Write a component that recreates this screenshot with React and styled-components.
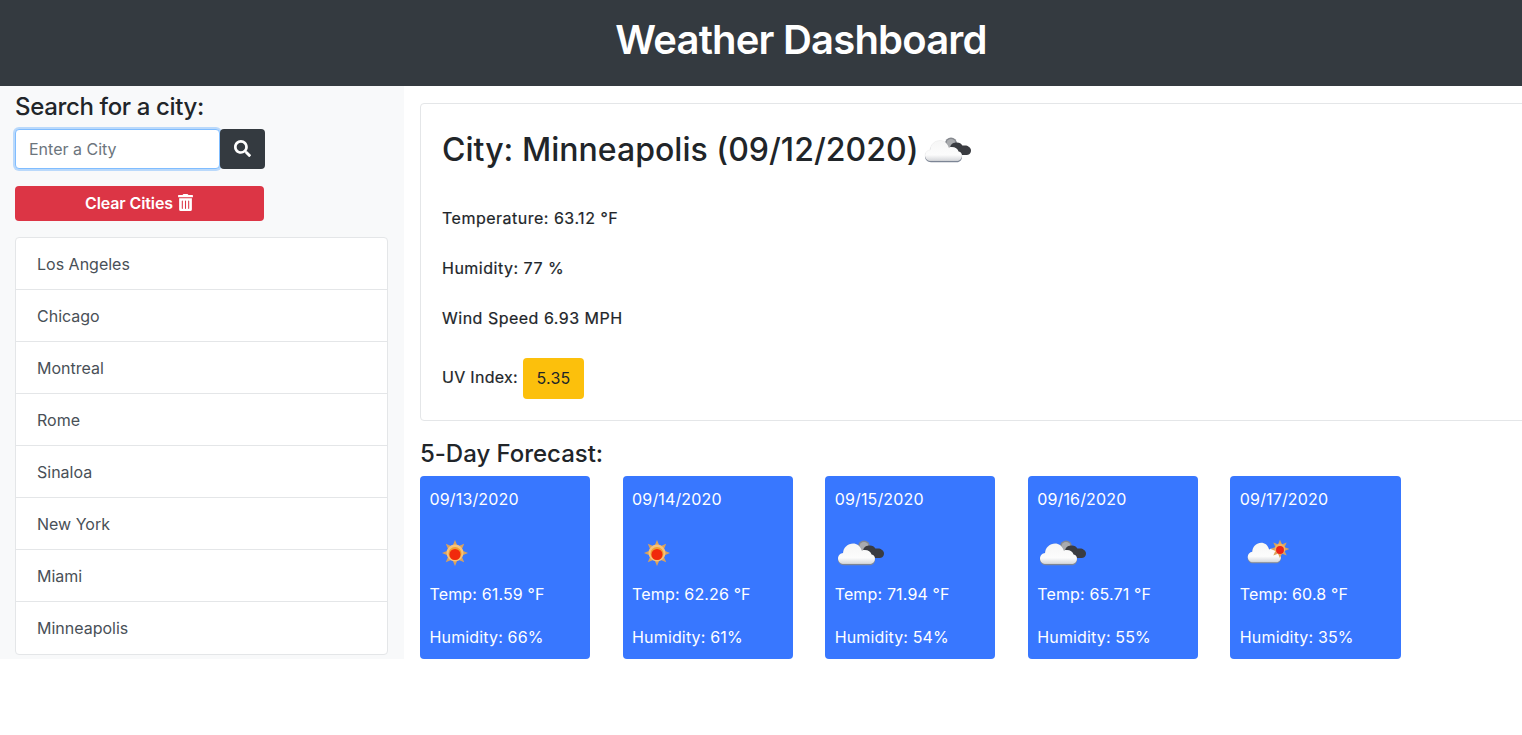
import React from 'react';
import styled, { createGlobalStyle } from 'styled-components';
import { FaSearch, FaTrashAlt } from 'react-icons/fa';

const cities = ['Los Angeles', 'Chicago', 'Montreal', 'Rome', 'Sinaloa', 'New York', 'Miami', 'Minneapolis'];

const forecast = [
  { date: '09/13/2020', icon: 'sun', temp: '61.59', humidity: '66' },
  { date: '09/14/2020', icon: 'sun', temp: '62.26', humidity: '61' },
  { date: '09/15/2020', icon: 'dark', temp: '71.94', humidity: '54' },
  { date: '09/16/2020', icon: 'dark', temp: '65.71', humidity: '55' },
  { date: '09/17/2020', icon: 'few', temp: '60.8', humidity: '35' },
];

const CLOUD = 'M9 36c-3.500 0-6-2.400-6-5.600 0-3 2.200-5.200 5-5.500 .4-5.500 4.800-9.400 10-9.400 4 0 7.300 2.200 8.800 7 1-.5 2-.6 3.200-.6 3.400 0 5.600 1.500 6.600 4.500 2.500 .5 3.400 2 3.400 4.300 0 2.700-2 5.300-5 5.300z';
const DARK_CLOUD = 'M29 30c-2.500 0-4.500-1.700-4.500-3.900 0-2.100 1.600-3.700 3.700-3.900 .5-3.400 3.400-4.700 6.800-4.700 2.600 0 4.200 1 5.400 3.100 .5-.1 2.100 0 2.600 0 2.700 0 6 2.100 6 4.800 0 3-2.200 4.600-5 4.600z';

function SunRays() {
  const rays = [0, 45, 90, 135, 180, 225, 270, 315];
  return rays.map((r) => (
    <polygon key={r} points="25,12 27.500,18 22.500,18" fill="#d8a25e" transform={`rotate(${r} 25 25)`} />
  ));
}

function WhiteCloud() {
  return (
    <>
      <defs>
        <linearGradient id="cloudFill" x1="0" y1="0" x2="0" y2="1">
          <stop offset="0" stopColor="#f6f6f6" />
          <stop offset="0.7" stopColor="#fcfcfc" />
          <stop offset="1" stopColor="#d4d6da" />
        </linearGradient>
      </defs>
      <path d={CLOUD} fill="#7f8898" transform="translate(0 1.200)" />
      <path d={CLOUD} fill="url(#cloudFill)" stroke="#000" strokeOpacity=".07" strokeWidth=".6" />
    </>
  );
}

function WeatherIcon({ type }) {
  if (type === 'sun') {
    return (
      <IconSvg viewBox="0 0 50 50">
        <SunRays />
        <circle cx="25" cy="25" r="8.500" fill="#f7c27a" />
        <circle cx="25" cy="25.500" r="6.500" fill="#f0a030" />
        <circle cx="25" cy="26.500" r="5.500" fill="#f12a0c" />
      </IconSvg>
    );
  }
  if (type === 'few') {
    return (
      <IconSvg viewBox="0 0 50 50">
        <g transform="translate(5 0) scale(.9 .95)">
          <WhiteCloud />
        </g>
        <g transform="translate(22 3) scale(.72)">
          <SunRays />
          <circle cx="25" cy="25" r="7.500" fill="#f7b35c" />
          <circle cx="25" cy="26.500" r="5.500" fill="#e9241a" />
        </g>
      </IconSvg>
    );
  }
  return (
    <IconSvg viewBox="0 0 50 50">
      <circle cx="29" cy="18.500" r="6" fill="#85888e" />
      <circle cx="29" cy="18.500" r="4.500" fill="#a9abae" />
      <path d={DARK_CLOUD} fill="#3a3c41" />
      <WhiteCloud />
    </IconSvg>
  );
}

function App() {
  return (
    <>
      <GlobalStyle />
      <Viewport>
        <Page>
          <Header>
            <Title>Weather Dashboard</Title>
          </Header>
          <Columns>
            <Sidebar>
              <SectionHeading>Search for a city:</SectionHeading>
              <SearchRow>
                <CityInput placeholder="Enter a City" />
                <SearchButton aria-label="Search"><FaSearch /></SearchButton>
              </SearchRow>
              <ClearButton>Clear Cities <FaTrashAlt /></ClearButton>
              <CityList>
                {cities.map((city) => (
                  <CityItem key={city}>{city}</CityItem>
                ))}
              </CityList>
            </Sidebar>
            <Main>
              <CurrentCard>
                <CityTitle>
                  City: Minneapolis (09/12/2020)
                  <TitleIcon><WeatherIcon type="dark" /></TitleIcon>
                </CityTitle>
                <Stat>Temperature: 63.12 °F</Stat>
                <Stat>Humidity: 77 %</Stat>
                <LastStat>Wind Speed 6.93 MPH</LastStat>
                <UvRow>
                  <UvLabel>UV Index:</UvLabel>
                  <UvBadge>5.35</UvBadge>
                </UvRow>
              </CurrentCard>
              <ForecastHeading>5-Day Forecast:</ForecastHeading>
              <ForecastRow>
                {forecast.map((day) => (
                  <DayCard key={day.date}>
                    <DayText>{day.date}</DayText>
                    <DayIcon><WeatherIcon type={day.icon} /></DayIcon>
                    <DayText>Temp: {day.temp} °F</DayText>
                    <Humidity>Humidity: {day.humidity}%</Humidity>
                  </DayCard>
                ))}
              </ForecastRow>
            </Main>
          </Columns>
        </Page>
      </Viewport>
    </>
  );
}

const GlobalStyle = createGlobalStyle`
  * {
    box-sizing: border-box;
  }
  html, body {
    margin: 0;
    background: #fff;
    overflow: hidden;
  }
  body {
    font-family: Inter, "Liberation Sans", sans-serif;
    font-size: 16px;
    line-height: 24px;
    color: #212529;
  }
`;

const Viewport = styled.div`
  width: 1522px;
  height: 735px;
  overflow: hidden;
`;

const Page = styled.div`
  width: 1602px;
`;

const Header = styled.header`
  height: 86px;
  background: #343a40;
  display: flex;
  align-items: center;
  justify-content: center;
`;

const Title = styled.h1`
  margin: 0 0 7px;
  color: #fff;
  font-size: 40px;
  line-height: 48px;
  font-weight: 600;
  letter-spacing: -0.8px;
`;

const Columns = styled.div`
  display: flex;
  align-items: stretch;
`;

const Sidebar = styled.aside`
  width: 404px;
  flex: none;
  background: #f8f9fa;
  padding: 6px 16px 3px 15px;
`;

const SectionHeading = styled.h4`
  margin: 0;
  font-size: 24px;
  line-height: 29px;
  font-weight: 500;
  letter-spacing: -0.35px;
`;

const SearchRow = styled.div`
  display: flex;
  margin-top: 8px;
`;

const CityInput = styled.input`
  width: 205px;
  height: 40px;
  padding: 0 13px;
  border: 1px solid #80bdff;
  border-radius: 4px;
  box-shadow: 0 0 0 2px rgba(0, 123, 255, 0.25);
  font: inherit;
  outline: none;
  background: #fff;
  &::placeholder {
    color: #6c757d;
    opacity: 1;
  }
`;

const SearchButton = styled.button`
  width: 45px;
  height: 40px;
  border: 0;
  border-radius: 4px;
  background: #343a40;
  color: #fff;
  font-size: 17px;
  display: flex;
  align-items: center;
  justify-content: center;
  padding: 0 0 2px;
`;

const ClearButton = styled.button`
  display: flex;
  align-items: center;
  justify-content: center;
  gap: 4px;
  width: 249px;
  height: 35px;
  margin-top: 17px;
  padding: 0 0 2px;
  border: 0;
  border-radius: 4px;
  background: #dc3545;
  color: #fff;
  font: 600 16px/24px Inter, "Liberation Sans", sans-serif;
  letter-spacing: -0.1px;
  svg {
    font-size: 17px;
  }
`;

const CityList = styled.ul`
  list-style: none;
  margin: 16px 0 0;
  padding: 0;
  background: #fff;
  border: 1px solid #e4e6e8;
  border-radius: 4px;
`;

const CityItem = styled.li`
  height: 52px;
  padding: 0 21px;
  display: flex;
  align-items: center;
  color: #495057;
  &:not(:last-child) {
    border-bottom: 1px solid #e4e6e8;
  }
`;

const Main = styled.main`
  flex: 1;
  padding: 17px 16px 0;
`;

const CurrentCard = styled.section`
  border: 1px solid #e4e6e8;
  border-radius: 4px;
  padding: 27px 21px 21px;
`;

const CityTitle = styled.h2`
  display: flex;
  align-items: center;
  height: 38px;
  margin: 0 0 37px;
  font-size: 32px;
  line-height: 38px;
  font-weight: 500;
  letter-spacing: 0.03px;
`;

const TitleIcon = styled.span`
  display: flex;
  margin-left: 4px;
`;

const IconSvg = styled.svg`
  width: 50px;
  height: 50px;
  display: block;
`;

const Stat = styled.p`
  margin: 0 0 26px;
  font-weight: 400;
  letter-spacing: 0.5px;
  -webkit-text-stroke: 0.2px #212529;
`;

const LastStat = styled(Stat)`
  margin-bottom: 28px;
`;

const UvRow = styled.div`
  display: flex;
  align-items: center;
  gap: 5px;
`;

const UvLabel = styled.span`
  margin-bottom: 3px;
  font-weight: 400;
  letter-spacing: 0.3px;
  -webkit-text-stroke: 0.2px #212529;
`;

const UvBadge = styled.span`
  width: 61px;
  height: 41px;
  display: flex;
  align-items: center;
  justify-content: center;
  background: #fcc00c;
  border-radius: 4px;
  padding-bottom: 1px;
  letter-spacing: 0.2px;
`;

const ForecastHeading = styled.h4`
  margin: 18px 0 8px;
  font-size: 24px;
  line-height: 29px;
  font-weight: 500;
  letter-spacing: -0.03px;
`;

const ForecastRow = styled.div`
  display: flex;
  gap: 32.4px;
`;

const DayCard = styled.article`
  width: 170.2px;
  height: 183px;
  padding: 11px 9.5px 10px;
  background: #3877ff;
  border-radius: 4px;
  color: #fff;
`;

const DayText = styled.div`
  white-space: nowrap;
  letter-spacing: 0.15px;
`;

const DayIcon = styled.div`
  margin: 17px 0 4px;
`;

const Humidity = styled(DayText)`
  margin-top: 19px;
`;

export default App;
